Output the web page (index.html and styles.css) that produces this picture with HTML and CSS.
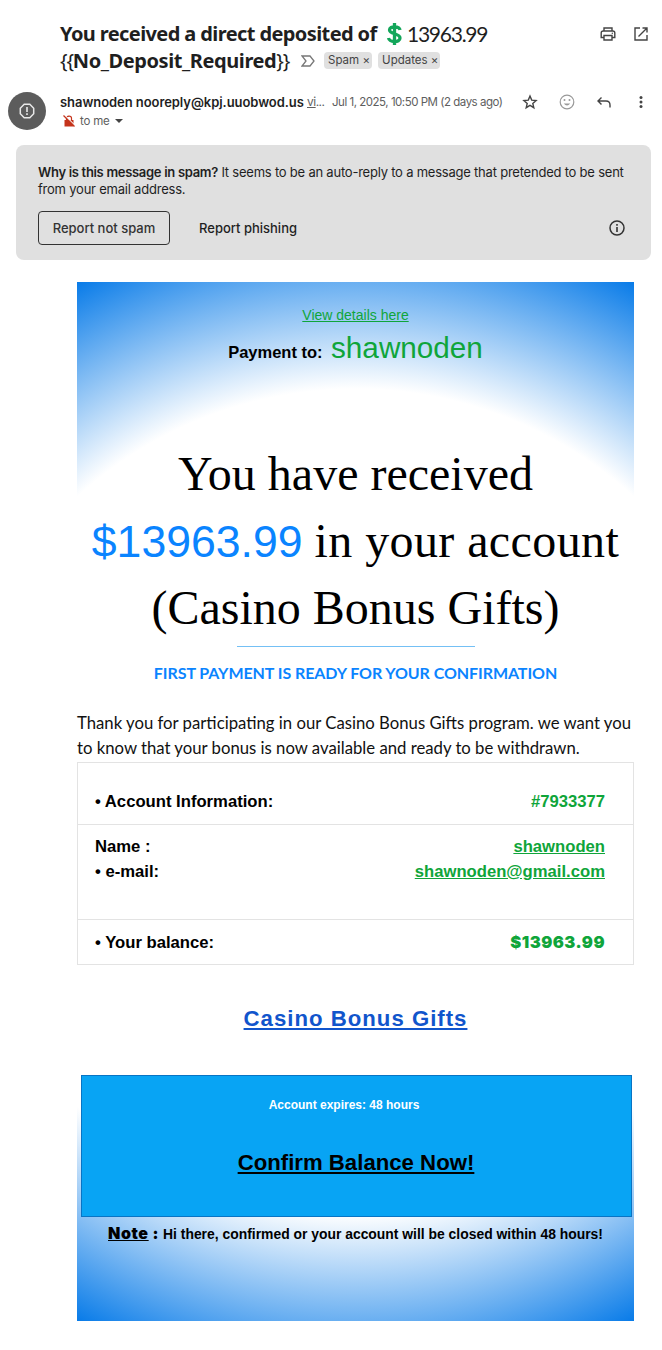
FILE: index.html
```html
<!DOCTYPE html>
<html lang="en">
  <head>
    <meta charset="UTF-8">
    <meta name="viewport" content="width=device-width, initial-scale=1.0">
    <title>You received a direct deposited of 13963.99</title>
    <link rel="stylesheet" href="styles.css">
  </head>
  <body>
    <header class="subject">
      <h1>
        <span class="line line-one"><b>You received a direct deposited of</b>
          <svg class="dollar" width="17" height="24" viewBox="0 0 17 24"><path d="M8.500 1v22M14 8C13.500 4 3.500 3.500 3.500 8c0 4.500 10.500 3 10.500 8 0 5-10.500 4.500-11.500 0" fill="none" stroke="#13a65a" stroke-width="3.300"/></svg>
          <span class="amount">13963.99</span></span>
        <span class="line line-two"><span class="braces">{{</span><b class="nodep">No_Deposit_Required</b><span class="braces">}}</span>
          <svg class="marker" width="14" height="12" viewBox="0 0 14 12"><path d="M1 1h8l4 5-4 5H1l4-5z" fill="none" stroke="#777" stroke-width="1.300"/></svg>
          <span class="tag tag-spam">Spam <i>×</i></span><span class="tag tag-updates">Updates <i>×</i></span></span>
      </h1>
      <div class="subject-icons">
        <svg width="16" height="16" viewBox="0 0 16 16"><path d="M4 5V2h8v3M4 11.500H1.200V7q0-2 2-2h9.600q2 0 2 2v4.500H12M4 9.500h8V14H4z" fill="none" stroke="#444" stroke-width="1.400"/><circle cx="12.300" cy="7.300" r=".7" fill="#444"/></svg>
        <svg width="16" height="16" viewBox="0 0 16 16"><path d="M7 2H2v12h12V9M9.500 2H14v4.500M14 2L5.500 10.500" fill="none" stroke="#444" stroke-width="1.400"/></svg>
      </div>
    </header>

    <section class="sender">
      <div class="avatar">
        <svg width="16" height="16" viewBox="0 0 16 16"><path d="M5.200 1.300h5.600l3.900 3.900v5.600l-3.900 3.900H5.200l-3.900-3.900V5.200z" fill="none" stroke="#e8e8e8" stroke-width="1.500"/><path d="M8 4v5M8 10.300v1.600" stroke="#e8e8e8" stroke-width="1.600"/></svg>
      </div>
      <div class="sender-info">
        <div class="sender-row">
          <b class="from">shawnoden nooreply@kpj.uuobwod.us</b>
          <span class="via"><u>vi</u>...</span>
          <span class="date">Jul 1, 2025, 10:50 PM (2 days ago)</span>
        </div>
        <div class="to-row">
          <svg width="12" height="12" viewBox="0 0 12 12"><path d="M1.500 5h9v6.500h-9z" fill="#c5341c"/><path d="M3.500 5V3.200C3.500.5 8.500.5 8.500 3.200V5" fill="none" stroke="#c5341c" stroke-width="1.200"/><path d="M1.500 0l11 11" stroke="#fff" stroke-width="1.200"/><path d="M.5.5l11 11" stroke="#c5341c" stroke-width="1.200"/></svg>
          <span>to me</span>
          <i class="caret"></i>
        </div>
      </div>
      <div class="sender-icons">
        <svg width="16" height="16" viewBox="0 0 16 16"><path d="M8 2.100l1.700 4 4.400.4-3.300 2.900 1 4.300L8 11.400l-3.800 2.300 1-4.300L1.900 6.500l4.400-.4z" fill="none" stroke="#444" stroke-width="1.400"/></svg>
        <svg width="16" height="16" viewBox="0 0 16 16"><circle cx="8" cy="8" r="6.800" fill="none" stroke="#999" stroke-width="1.200"/><circle cx="5.500" cy="6" r="1" fill="#999"/><circle cx="10.500" cy="6" r="1" fill="#999"/><path d="M4.800 9.500q3.200 3.800 6.400 0z" fill="#999"/></svg>
        <svg width="16" height="16" viewBox="0 0 16 16"><path d="M5.500 3.500L2 7l3.500 3.500M2.200 7H10q4 0 4 4v2.500" fill="none" stroke="#444" stroke-width="1.400"/></svg>
        <svg width="16" height="16" viewBox="0 0 16 16"><circle cx="8" cy="3.500" r="1.500" fill="#444"/><circle cx="8" cy="8" r="1.500" fill="#444"/><circle cx="8" cy="12.500" r="1.500" fill="#444"/></svg>
      </div>
    </section>

    <section class="spam-box">
      <p><span class="line"><b>Why is this message in spam?</b> It seems to be an auto-reply to a message that pretended to be sent</span>
      <span class="line">from your email address.</span></p>
      <div class="spam-actions">
        <button class="button">Report not spam</button>
        <span class="phishing">Report phishing</span>
        <svg class="info" width="16" height="16" viewBox="0 0 16 16"><circle cx="8" cy="8" r="7" fill="none" stroke="#333" stroke-width="1.500"/><path d="M8 7v5M8 4v1.700" stroke="#333" stroke-width="1.600"/></svg>
      </div>
    </section>

    <main class="mail">
      <div class="details"><u>View details here</u></div>
      <div class="payment"><b>Payment to:</b> <span>shawnoden</span></div>
      <h2>
        <span class="line">You have received</span>
        <span class="line"><span class="sum">$13963.99</span> <span class="account">in your account</span></span>
        <span class="line">(Casino Bonus Gifts)</span>
      </h2>
      <div class="divider"></div>
      <div class="first">FIRST PAYMENT IS READY FOR YOUR CONFIRMATION</div>
      <p class="thanks"><span class="line">Thank you for participating in our Casino Bonus Gifts program. we want you</span>
      <span class="line">to know that your bonus is now available and ready to be withdrawn.</span></p>
      <div class="info-table">
        <div class="row row-account"><span>• Account Information:</span><span class="green">#7933377</span></div>
        <div class="row row-name">
          <span><span class="line">Name :</span><span class="line">• e-mail:</span></span>
          <span class="green"><u class="line">shawnoden</u><u class="line">shawnoden@gmail.com</u></span>
        </div>
        <div class="row row-balance"><span>• Your balance:</span><span class="green balance">$13963.99</span></div>
      </div>
      <div class="casino"><u>Casino Bonus Gifts</u></div>
      <div class="confirm">
        <span class="expires">Account expires: 48 hours</span>
        <u class="confirm-link">Confirm Balance Now!</u>
      </div>
      <div class="note"><span class="note-title"><u>Note</u> :</span> <span class="note-text">Hi there, confirmed or your account will be closed within 48 hours!</span></div>
    </main>
  </body>
</html>
```
FILE: styles.css
```css
body {
  margin: 0;
  background-color: #fff;
  font-family: Inter, sans-serif;
  color: #1f1f1f;
}
.line {
  display: block;
  white-space: nowrap;
}
svg {
  flex: none;
}

/* Subject */
.subject {
  display: flex;
  justify-content: space-between;
  height: 55px;
  padding: 20px 13px 0 60px;
}
h1 {
  margin: 0;
  font-family: "Noto Sans", sans-serif;
  font-size: 20px;
  font-weight: normal;
}
h1 .line {
  display: flex;
  align-items: center;
  height: 27px;
}
.line-one b {
  width: 326px;
  letter-spacing: -0.6px;
}
.dollar {
  margin-right: 4px;
}
.amount {
  font-family: Lato, sans-serif;
  font-size: 21px;
  letter-spacing: -1.25px;
}
.braces {
  letter-spacing: -1.2px;
}
.nodep {
  letter-spacing: -0.42px;
}
.marker {
  margin: 0 9px 0 12px;
}
.tag {
  height: 17px;
  box-sizing: border-box;
  padding: 0 4px;
  border-radius: 4px;
  background-color: #e0e0e0;
  font-family: Inter, sans-serif;
  font-size: 11.5px;
  line-height: 17px;
  color: #444;
}
.tag i {
  font-style: normal;
}
.tag-spam {
  width: 48px;
  margin-right: 6px;
}
.tag-updates {
  width: 62px;
}
.subject-icons {
  display: flex;
  gap: 17px;
  padding-top: 6px;
}

/* Sender */
.sender {
  display: flex;
  height: 52px;
  margin-top: 17px;
  padding: 0 13px 0 8px;
}
.avatar {
  display: flex;
  align-items: center;
  justify-content: center;
  width: 38px;
  height: 38px;
  border-radius: 50%;
  background-color: #5c5c5c;
}
.sender-info {
  width: 446px;
  margin-left: 14px;
}
.sender-row {
  display: flex;
  height: 20px;
  line-height: 20px;
  white-space: nowrap;
  font-size: 12px;
  color: #5e5e5e;
}
.from {
  flex: none;
  width: 247px;
  font-size: 13px;
  font-weight: 600;
  letter-spacing: -0.06px;
  color: #1f1f1f;
}
.via {
  flex: none;
  width: 25px;
  letter-spacing: -0.5px;
}
.date {
  font-size: 11.5px;
  letter-spacing: -0.48px;
}
.to-row {
  display: flex;
  align-items: center;
  gap: 5px;
  height: 18px;
  padding-left: 3px;
  font-size: 11.5px;
  letter-spacing: -0.2px;
  color: #5e5e5e;
}
.caret {
  border-top: 4px solid #444;
  border-right: 4px solid transparent;
  border-left: 4px solid transparent;
}
.sender-icons {
  display: flex;
  gap: 21px;
  margin-left: auto;
  padding-top: 2px;
}

/* Spam warning */
.spam-box {
  box-sizing: border-box;
  width: 635px;
  height: 115px;
  margin: 1px 0 0 16px;
  padding: 19px 22px 0;
  border-radius: 8px;
  background-color: #e0e0e0;
  font-size: 13px;
}
.spam-box p {
  margin: 0;
  line-height: 17px;
  letter-spacing: -0.22px;
}
.spam-box b {
  font-weight: 600;
  letter-spacing: -0.31px;
}
.spam-actions {
  display: flex;
  align-items: center;
  margin-top: 13px;
}
.button {
  width: 132px;
  height: 34px;
  margin: 0;
  padding: 0;
  border: 1px solid #333;
  border-radius: 4px;
  background: none;
  color: #333;
  font: 500 13px Inter, sans-serif;
}
.phishing {
  margin-left: 29px;
  font-weight: 500;
}
.info {
  margin-left: auto;
  margin-right: 4px;
}

/* Mail body */
.mail {
  box-sizing: border-box;
  width: 557px;
  height: 1039px;
  margin: 22px 0 0 77px;
  background: radial-gradient(circle, #fff 70%, #087be8 100%);
  font-family: "Liberation Sans", Arial, sans-serif;
  color: #000;
  text-align: center;
}
.details {
  height: 43px;
  padding-top: 25px;
  line-height: 17px;
  font-size: 14px;
  color: #0fa53a;
}
.payment {
  height: 37px;
  margin-top: -21px;
  line-height: 37px;
}
.payment b {
  font-size: 16.5px;
}
.payment span {
  margin-left: 4px;
  font-size: 29.7px;
  color: #0fa53a;
}
h2 {
  margin: 74px 0 0;
  font-family: Georgia, "Liberation Serif", serif;
  font-size: 48px;
  font-weight: normal;
  line-height: 67px;
}
h2 .line {
  height: 67px;
}
.sum {
  font-family: "Liberation Sans", Arial, sans-serif;
  font-size: 44.6px;
  line-height: 1;
  color: #0a84ff;
}
.account {
  letter-spacing: 0.4px;
}
.divider {
  width: 238px;
  height: 1px;
  margin: 5px auto 0;
  background-color: #74c0f5;
}
.first {
  margin-top: 14px;
  line-height: 24px;
  font-family: Lato, sans-serif;
  font-size: 16px;
  font-weight: bold;
  letter-spacing: -0.07px;
  color: #0a84ff;
}
.thanks {
  margin: 25px 0 2px;
  text-align: left;
  line-height: 25px;
  font-family: Lato, sans-serif;
  font-size: 16.73px;
  color: #111;
}
.info-table {
  border: 1px solid #e3e3e3;
  font-size: 16.67px;
  font-weight: bold;
  line-height: 25px;
}
.row {
  display: flex;
  justify-content: space-between;
  box-sizing: border-box;
  padding: 0 28px 0 17px;
  text-align: left;
}
.row + .row {
  border-top: 1px solid #e3e3e3;
}
.green {
  color: #0fa53a;
  text-align: right;
}
.row-account {
  height: 61px;
  padding-top: 26px;
}
.row-name {
  height: 95px;
  padding-top: 9px;
}
.row-balance {
  height: 45px;
  padding-top: 10px;
}
.balance {
  font-family: Inter, sans-serif;
  font-size: 16.5px;
  font-weight: 900;
  letter-spacing: 0.45px;
}
.casino {
  margin-top: 39px;
  line-height: 30px;
  font-size: 22.2px;
  font-weight: bold;
  letter-spacing: 1px;
  color: #1155cc;
}
.confirm {
  box-sizing: border-box;
  width: 551px;
  height: 142px;
  margin: 41px 0 0 4px;
  padding-top: 20px;
  border: 1px solid #0874c4;
  background-color: #08a4f4;
  font-weight: bold;
}
.expires {
  display: block;
  margin-right: 25px;
  line-height: 18px;
  font-size: 12px;
  color: #fff;
}
.confirm-link {
  display: block;
  margin: 34px 1px 0 0;
  line-height: 30px;
  font-size: 22.2px;
}
.note {
  display: flex;
  justify-content: center;
  align-items: baseline;
  gap: 4px;
  height: 32px;
  line-height: 32px;
  white-space: nowrap;
  font-size: 13.9px;
  font-weight: bold;
}
.note-title {
  font-family: Inter, sans-serif;
  font-size: 16px;
  font-weight: 900;
  letter-spacing: 0.6px;
}
```
